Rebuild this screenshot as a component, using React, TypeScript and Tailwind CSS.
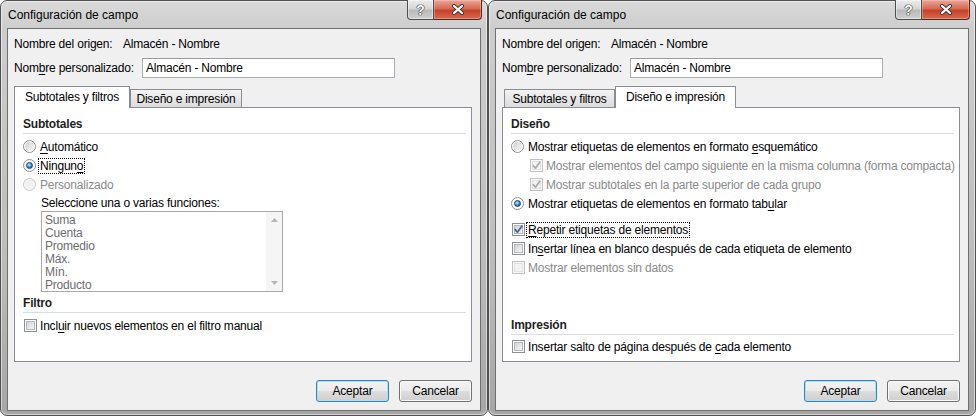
import type { ReactNode } from "react";

// Classic Windows 7 style "Configuración de campo" dialogs, side by side

function CheckMark({ muted }: { muted?: boolean }) {
  return (
    <svg width="11" height="11" viewBox="0 0 11 11" className="absolute left-[0px] top-[0px]">
      <path
        d="M2.2 5.6 L4.4 8.2 L8.8 2.2"
        fill="none"
        stroke={muted ? "#a9a9a9" : "#4a5f96"}
        strokeWidth="1.7"
        strokeLinecap="round"
        strokeLinejoin="round"
      />
    </svg>
  );
}

function Checkbox({ checked, disabled }: { checked?: boolean; disabled?: boolean }) {
  return (
    <span
      className={`relative block h-[13px] w-[13px] shrink-0 border p-[1px] ${
        disabled ? "border-[#c2c2c2] bg-[#f7f7f7]" : "border-[#8e8f8f] bg-white"
      }`}
    >
      <span
        className={`block h-full w-full border ${
          disabled
            ? "border-[#e2e2e2] bg-[#f3f3f3]"
            : "border-[#b4b7bb] bg-gradient-to-br from-[#d0d3d7] to-[#f7f7f7]"
        }`}
      />
      {checked && <CheckMark muted={disabled} />}
    </span>
  );
}

function Radio({ selected, disabled }: { selected?: boolean; disabled?: boolean }) {
  return (
    <span
      className={`flex h-[13px] w-[13px] shrink-0 items-center justify-center rounded-full border ${
        disabled ? "border-[#c8c8c8] bg-[#f7f7f7]" : "border-[#8e8f8f] bg-white"
      }`}
    >
      {selected ? (
        <span className="h-[7px] w-[7px] rounded-full border border-[#1c3b5c] bg-[radial-gradient(circle_at_38%_35%,#c6ecff_0%,#2c8fe0_55%,#0c4a8a_100%)]" />
      ) : (
        <span
          className={`h-[9px] w-[9px] rounded-full ${
            disabled ? "bg-[#f1f1f1]" : "bg-gradient-to-br from-[#cdd0d4] to-[#f8f8f8]"
          }`}
        />
      )}
    </span>
  );
}

function Option({
  control,
  ctrl,
  disabled,
  focused,
  children,
}: {
  control: ReactNode;
  ctrl: string;
  disabled?: boolean;
  focused?: boolean;
  children: ReactNode;
}) {
  return (
    <div className="flex h-[19px] items-center">
      <span className={ctrl}>{control}</span>
      <span
        className={`whitespace-nowrap border px-[1px] leading-[14px] ${
          focused ? "border-dotted border-black" : "border-transparent"
        } ${disabled ? "text-[#8a8a8a]" : "text-black"}`}
      >
        {children}
      </span>
    </div>
  );
}

function Key({ children }: { children: ReactNode }) {
  return <span className="underline underline-offset-[2px]">{children}</span>;
}

function Heading({ children, className }: { children: ReactNode; className?: string }) {
  return (
    <div className={className}>
      <div className="h-[16px] font-bold leading-[16px] text-[#1e1e1e]">{children}</div>
      <div className="mt-[1px] h-px w-[443px] bg-[#d7dde3]" />
    </div>
  );
}

function DlgButton({ label, isDefault }: { label: string; isDefault?: boolean }) {
  return (
    <div
      className={`flex h-[22px] w-[73px] items-center justify-center rounded-[3px] border bg-[linear-gradient(to_bottom,#f2f2f2_0%,#ebebeb_48%,#dddddd_52%,#cfcfcf_100%)] ${
        isDefault
          ? "border-[#3c7fb1] shadow-[inset_0_0_0_1px_#a6e2f9]"
          : "border-[#707070] shadow-[inset_0_0_0_1px_#fbfbfb]"
      }`}
    >
      {label}
    </div>
  );
}

function CaptionButtons() {
  return (
    <div className="absolute right-[5px] top-[-1px] flex h-[20px]">
      <div className="flex w-[27px] items-center justify-center rounded-bl-[4px] border border-t-0 border-[#4d4d4d] bg-[linear-gradient(to_bottom,#ececec_0%,#d6d6d6_45%,#b9b9b9_55%,#cfcfcf_100%)] shadow-[inset_0_0_0_1px_rgba(255,255,255,0.45)]">
        <span className="text-[14px] font-bold leading-none text-white [text-shadow:0_0_1px_#222,0_0_1px_#222,0_0_1px_#222]">
          ?
        </span>
      </div>
      <div className="flex w-[48px] items-center justify-center rounded-br-[4px] border border-l-0 border-t-0 border-[#4d2a22] bg-[linear-gradient(to_bottom,#e9a899_0%,#d76a52_45%,#c5412a_55%,#d86a4e_100%)] shadow-[inset_0_0_0_1px_rgba(255,220,210,0.35)]">
        <svg width="14" height="11" viewBox="0 0 14 11">
          <path d="M3 2 L11 9 M11 2 L3 9" stroke="#3a3a3a" strokeWidth="4" strokeLinecap="round" />
          <path d="M3 2 L11 9 M11 2 L3 9" stroke="#ffffff" strokeWidth="2.2" strokeLinecap="round" />
        </svg>
      </div>
    </div>
  );
}

function Tab({ label, active, w, ml }: { label: string; active?: boolean; w: string; ml?: string }) {
  return active ? (
    <div
      className={`relative z-10 -mb-px flex h-[22px] items-center justify-center border border-b-0 border-[#898c95] bg-white pb-[1px] ${w} ${ml ?? ""}`}
    >
      {label}
    </div>
  ) : (
    <div
      className={`flex h-[18px] items-center justify-center border border-b-0 border-[#898c95] bg-gradient-to-b from-[#f3f3f3] to-[#dcdcdc] pt-[1px] ${w} ${ml ?? ""}`}
    >
      {label}
    </div>
  );
}

function FieldDialog({ tab, children }: { tab: "subtotales" | "diseno"; children: ReactNode }) {
  return (
    <div className="relative flex h-[416px] w-[488px] shrink-0 flex-col rounded-[7px] border border-[#505050] bg-[linear-gradient(to_bottom,#dadada_0px,#cdcdcd_28px,#bdbdbd_60%,#a6a6a6_100%)] shadow-[inset_0_0_0_1px_rgba(255,255,255,0.5)]">
      <div className="flex h-[27px] items-center pl-[7px] text-[12px] tracking-normal text-black">
        Configuración de campo
      </div>
      <CaptionButtons />
      <div className="mx-[6px] mb-[4px] flex flex-1 flex-col border border-[#6f6f6f] bg-[#f0f0f0] px-[6px] pt-[7px]">
        <div className="flex h-[16px] items-center">
          <span className="w-[109px]">Nombre del origen:</span>
          <span>Almacén - Nombre</span>
        </div>
        <div className="mt-[6px] flex h-[20px] items-center">
          <span className="w-[128px]">
            Nom<Key>b</Key>re personalizado:
          </span>
          <div className="flex h-[20px] w-[253px] items-center border border-[#abadb3] border-t-[#9a9ca3] bg-white pl-[3px]">
            Almacén - Nombre
          </div>
        </div>

        <div className="mt-[8px] flex h-[21px] items-end">
          {tab === "subtotales" ? (
            <>
              <Tab label="Subtotales y filtros" active w="w-[116px]" />
              <Tab label="Diseño e impresión" w="w-[112px]" />
            </>
          ) : (
            <>
              <Tab label="Subtotales y filtros" w="w-[111px]" ml="ml-[2px]" />
              <Tab label="Diseño e impresión" active w="w-[121px]" />
            </>
          )}
        </div>
        <div className="h-[255px] w-[458px] border border-[#898c95] bg-white pl-[8px] pt-[8px]">{children}</div>

        <div className="mt-[18px] flex w-[458px] justify-end gap-[10px]">
          <DlgButton label="Aceptar" isDefault />
          <DlgButton label="Cancelar" />
        </div>
      </div>
    </div>
  );
}

function ArrowUp() {
  return (
    <svg width="7" height="4" viewBox="0 0 7 4">
      <path d="M0 4 L3.5 0 L7 4 Z" fill="#b4b4b4" />
    </svg>
  );
}

function ArrowDown() {
  return (
    <svg width="7" height="4" viewBox="0 0 7 4">
      <path d="M0 0 L7 0 L3.5 4 Z" fill="#b4b4b4" />
    </svg>
  );
}

const funciones = ["Suma", "Cuenta", "Promedio", "Máx.", "Mín.", "Producto"];

function SubtotalesPanel() {
  return (
    <div>
      <Heading>Subtotales</Heading>
      <div className="mt-[3px]">
        <Option control={<Radio />} ctrl="mr-[2px]">
          <Key>A</Key>utomático
        </Option>
        <Option control={<Radio selected />} ctrl="mr-[2px]" focused>
          Ningun<Key>o</Key>
        </Option>
        <Option control={<Radio disabled />} ctrl="mr-[2px]" disabled>
          Personalizado
        </Option>
      </div>
      <div className="ml-[18px] mt-[1px] h-[16px] leading-[16px]">Seleccione una o varias funciones:</div>
      <div className="ml-[18px] flex h-[81px] w-[242px] border border-[#a9a9a9] bg-white">
        <div className="flex-1 overflow-hidden pl-[3px] pt-[2px] text-[#6d6d6d]">
          {funciones.map((f) => (
            <div key={f} className="h-[13px] leading-[13px]">
              {f}
            </div>
          ))}
        </div>
        <div className="flex w-[16px] flex-col items-center justify-between bg-[#f5f5f5] py-[6px]">
          <ArrowUp />
          <ArrowDown />
        </div>
      </div>
      <Heading className="mt-[3px]">Filtro</Heading>
      <div className="mt-[3px]">
        <Option control={<Checkbox />} ctrl="ml-[1px] mr-[1px]">
          Incl<Key>u</Key>ir nuevos elementos en el filtro manual
        </Option>
      </div>
    </div>
  );
}

function DisenoPanel() {
  return (
    <div>
      <Heading>Diseño</Heading>
      <div className="mt-[3px]">
        <Option control={<Radio />} ctrl="mr-[2px]">
          Mostrar etiquetas de elementos en formato <Key>e</Key>squemático
        </Option>
        <Option control={<Checkbox checked disabled />} ctrl="ml-[19px] mr-[1px]" disabled>
          Mostrar elementos del campo siguiente en la misma columna (forma compacta)
        </Option>
        <Option control={<Checkbox checked disabled />} ctrl="ml-[19px] mr-[1px]" disabled>
          Mostrar subtotales en la parte superior de cada grupo
        </Option>
        <Option control={<Radio selected />} ctrl="mr-[2px]">
          Mostrar etiquetas de elementos en formato tab<Key>u</Key>lar
        </Option>
      </div>
      <div className="mt-[7px]">
        <Option control={<Checkbox checked />} ctrl="ml-[1px] mr-[1px]" focused>
          <Key>R</Key>epetir etiquetas de elementos
        </Option>
        <Option control={<Checkbox />} ctrl="ml-[1px] mr-[1px]">
          In<Key>s</Key>ertar línea en blanco después de cada etiqueta de elemento
        </Option>
        <Option control={<Checkbox disabled />} ctrl="ml-[1px] mr-[1px]" disabled>
          Mostrar elementos sin datos
        </Option>
      </div>
      <Heading className="mt-[40px]">Impresión</Heading>
      <div className="mt-[2px]">
        <Option control={<Checkbox />} ctrl="ml-[1px] mr-[1px]">
          Insertar salto de página después de <Key>c</Key>ada elemento
        </Option>
      </div>
    </div>
  );
}

export default function App() {
  return (
    <div className="flex h-[418px] w-[976px] overflow-hidden bg-white font-['Liberation_Sans',Arial,sans-serif] text-[12px] tracking-[-0.2px] text-black">
      <FieldDialog tab="subtotales">
        <SubtotalesPanel />
      </FieldDialog>
      <FieldDialog tab="diseno">
        <DisenoPanel />
      </FieldDialog>
    </div>
  );
}
